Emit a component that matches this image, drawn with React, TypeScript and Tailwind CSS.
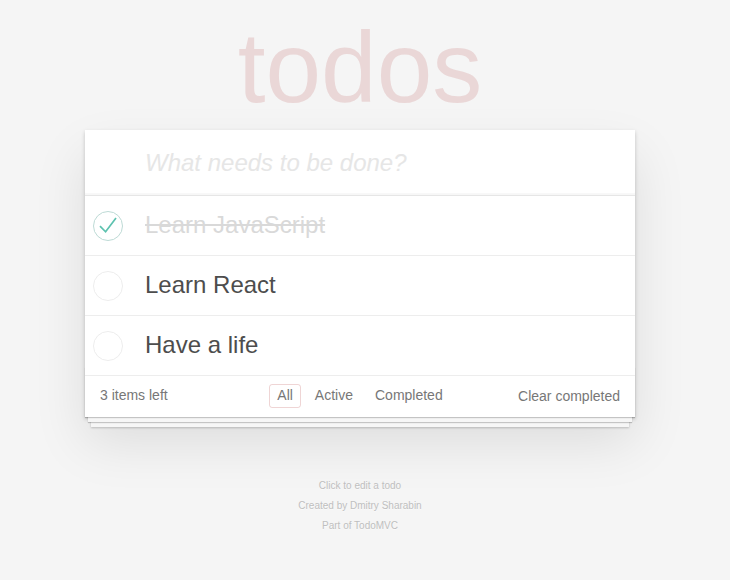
import { useState } from "react";

type Todo = { id: number; title: string; completed: boolean };

const initialTodos: Todo[] = [
  { id: 1, title: "Learn JavaScript", completed: true },
  { id: 2, title: "Learn React", completed: false },
  { id: 3, title: "Have a life", completed: false },
];

function Toggle({ checked }: { checked: boolean }) {
  return (
    <svg width="30" height="30" viewBox="0 0 30 30" className="shrink-0">
      <circle
        cx="15"
        cy="15"
        r="14.5"
        fill="none"
        stroke={checked ? "#bddad5" : "#ededed"}
        strokeWidth="1"
      />
      {checked && (
        <path
          d="M7 15.2 L12.6 20.8 L23 7"
          fill="none"
          stroke="#5dc2af"
          strokeWidth="1.7"
        />
      )}
    </svg>
  );
}

export default function App() {
  const [todos] = useState<Todo[]>(initialTodos);

  return (
    <div className="min-h-[580px] bg-[#f5f5f5] pr-[10px] font-['Liberation_Sans',Arial,sans-serif] text-[14px] leading-[1.4em] text-[#4d4d4d]">
      {/* Title */}
      <h1 className="h-[130px] pt-[17px] text-center text-[100px] leading-none font-thin text-[rgba(175,47,47,0.15)]">
        todos
      </h1>

      {/* Card */}
      <section className="mx-auto w-[550px] bg-white shadow-[0_2px_4px_0_rgba(0,0,0,0.2),0_25px_50px_0_rgba(0,0,0,0.1)]">
        <div className="h-[65px] pl-[60px] pr-4 pt-4 shadow-[inset_0_-2px_1px_rgba(0,0,0,0.03)]">
          <input
            placeholder="What needs to be done?"
            className="w-full bg-transparent text-[24px] leading-[1.4em] outline-none placeholder:italic placeholder:text-[#e6e6e6]"
          />
        </div>

        <ul className="border-t border-[#e6e6e6]">
          {todos.map((t) => (
            <li
              key={t.id}
              className="flex h-[60px] items-center border-b border-[#ededed] pl-2"
            >
              <Toggle checked={t.completed} />
              <label
                className={`ml-[22px] text-[24px] leading-[1.2] ${
                  t.completed ? "text-[#d9d9d9] line-through" : "text-[#4d4d4d]"
                }`}
              >
                {t.title}
              </label>
            </li>
          ))}
        </ul>

        {/* Footer */}
        <footer className="relative grid h-[41px] grid-cols-[1fr_auto_1fr] items-center px-[15px] text-[#777] before:absolute before:inset-x-0 before:bottom-0 before:h-[50px] before:content-[''] before:shadow-[0_1px_1px_rgba(0,0,0,0.2),0_8px_0_-3px_#f6f6f6,0_9px_1px_-3px_rgba(0,0,0,0.2),0_16px_0_-6px_#f6f6f6,0_17px_2px_-6px_rgba(0,0,0,0.2)]">
          <span className="relative -mt-[1px]">3 items left</span>
          <ul className="relative -mt-[1px] flex items-center">
            <li>
              <a className="m-[3px] block rounded-[3px] border border-[rgba(175,47,47,0.2)] px-[7px] py-[1px] text-[#777]">
                All
              </a>
            </li>
            <li>
              <a className="m-[3px] block rounded-[3px] border border-transparent px-[7px] py-[1px]">
                Active
              </a>
            </li>
            <li>
              <a className="m-[3px] block rounded-[3px] border border-transparent px-[7px] py-[1px]">
                Completed
              </a>
            </li>
          </ul>
          <button className="relative justify-self-end pt-[1px] text-[#777]">
            Clear completed
          </button>
        </footer>
      </section>

      {/* Info */}
      <footer className="mt-[64px] text-center text-[10px] leading-none text-[#bfbfbf] [text-shadow:0_1px_0_rgba(255,255,255,0.5)]">
        <p>Click to edit a todo</p>
        <p className="mt-[10px]">Created by Dmitry Sharabin</p>
        <p className="mt-[10px]">Part of TodoMVC</p>
      </footer>
    </div>
  );
}
